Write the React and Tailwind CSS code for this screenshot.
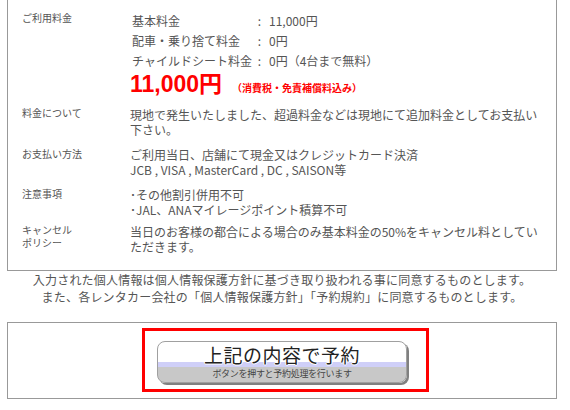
const JP = { fontFamily: '"Noto Sans CJK JP", "Liberation Sans", sans-serif' };

function Row({ label, children, className = "" }) {
  return (
    <div className={`flex ${className}`}>
      <div className="w-[108px] shrink-0 text-[10px] leading-[14px] text-[#555]">{label}</div>
      <div className="w-[414px] text-[12px] text-[#555]">{children}</div>
    </div>
  );
}

function FeeLine({ name, value }) {
  return (
    <div className="grid grid-cols-[121px_13px_auto] h-[20px] leading-[20px] pl-[2px] whitespace-nowrap">
      <span>{name}</span>
      <span className="text-center">:</span>
      <span className="pl-[3px]">{value}</span>
    </div>
  );
}

export default function App() {
  return (
    <div className="w-[570px] h-[410px] bg-white overflow-hidden" style={JP}>
      <div className="ml-[7px] w-[550px]">
        {/* details box (top edge scrolled out of view) */}
        <div className="border-x border-b border-[#999] pl-[14px] pb-[15px] h-[271px]">
          <Row label={<div className="pt-[11px]">ご利用料金</div>}>
            <div className="pt-[11px]">
              <FeeLine name="基本料金" value="11,000円" />
              <FeeLine name="配車・乗り捨て料金" value="0円" />
              <FeeLine name="チャイルドシート料金" value="0円（4台まで無料）" />
              <div className="flex items-baseline h-[26px] leading-[26px]">
                <span
                  className="text-[23px] font-bold text-[#ff0000]"
                  style={{ fontFamily: '"Liberation Sans", "Noto Sans CJK JP", sans-serif' }}
                >
                  11,000円
                </span>
                <span className="ml-[10px] text-[10px] font-bold text-[#ff0000]">（消費税・免責補償料込み）</span>
              </div>
            </div>
          </Row>

          <Row label="料金について" className="mt-[9px]">
            <div className="leading-[15px] pt-[1px]">
              現地で発生いたしました、超過料金などは現地にて追加料金としてお支払い下さい。
            </div>
          </Row>

          <Row label="お支払い方法" className="mt-[10px]">
            <div className="leading-[15px]">
              <div>ご利用当日、店舗にて現金又はクレジットカード決済</div>
              <div>JCB , VISA , MasterCard , DC , SAISON等</div>
            </div>
          </Row>

          <Row label="注意事項" className="mt-[10px]">
            <div className="leading-[15px]">
              <div>･その他割引併用不可</div>
              <div>･JAL、ANAマイレージポイント積算不可</div>
            </div>
          </Row>

          <Row label={<div className="leading-[13px]">キャンセル<br />ポリシー</div>} className="mt-[6px]">
            <div className="leading-[15px] pt-[1px]">
              当日のお客様の都合による場合のみ基本料金の50%をキャンセル料としていただきます。
            </div>
          </Row>
        </div>

        {/* agreement notes */}
        <div className="text-center text-[12px] leading-[17px] text-[#555] tracking-[0.2px]">
          <p>入力された個人情報は個人情報保護方針に基づき取り扱われる事に同意するものとします。</p>
          <p>また、各レンタカー会社の「個人情報保護方針」「予約規約」に同意するものとします。</p>
        </div>

        {/* submit box */}
        <div className="mt-[17px] border border-[#999] h-[77px] pt-[5px] pl-[134px]">
          <div className="w-[287px] h-[64px] border-[3px] border-[#ff0000] pt-[10px] pl-[12px]">
            <button
              type="button"
              className="w-[250px] h-[42px] rounded-[8px] border border-[#a0a0a0] shadow-[2px_2px_0_#808080] bg-[linear-gradient(to_bottom,#ffffff_0,#ffffff_20px,#cfcff8_20px,#cfcff8_25px,#c8c8c8_25px,#c8c8c8_100%)] flex flex-col items-center cursor-pointer"
            >
              <span className="pt-[3px] text-[19px] leading-[20px] tracking-[0.5px] text-[#222] [text-shadow:1px_0_#fff,-1px_0_#fff,0_1px_#fff,0_-1px_#fff]">
                上記の内容で予約
              </span>
              <span className="mt-[4px] text-[9px] leading-[10px] tracking-[-0.3px] text-[#444]">
                ボタンを押すと予約処理を行います
              </span>
            </button>
          </div>
        </div>
      </div>
    </div>
  );
}
